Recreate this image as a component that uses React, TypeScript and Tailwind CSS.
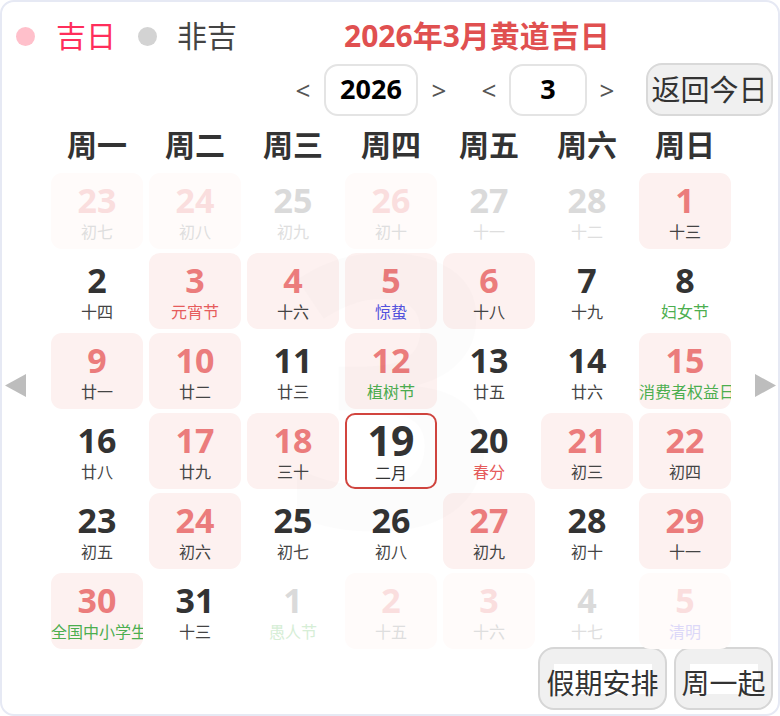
import React from "react";

type Cell = {
  d: number;
  l: string;
  red?: boolean; // auspicious (pink bg, red number)
  other?: boolean;
  lc?: "red" | "blue" | "green";
  today?: boolean;
};

const rows: Cell[][] = [
  [
    { d: 23, l: "初七", red: true, other: true },
    { d: 24, l: "初八", red: true, other: true },
    { d: 25, l: "初九", other: true },
    { d: 26, l: "初十", red: true, other: true },
    { d: 27, l: "十一", other: true },
    { d: 28, l: "十二", other: true },
    { d: 1, l: "十三", red: true },
  ],
  [
    { d: 2, l: "十四" },
    { d: 3, l: "元宵节", red: true, lc: "red" },
    { d: 4, l: "十六", red: true },
    { d: 5, l: "惊蛰", red: true, lc: "blue" },
    { d: 6, l: "十八", red: true },
    { d: 7, l: "十九" },
    { d: 8, l: "妇女节", lc: "green" },
  ],
  [
    { d: 9, l: "廿一", red: true },
    { d: 10, l: "廿二", red: true },
    { d: 11, l: "廿三" },
    { d: 12, l: "植树节", red: true, lc: "green" },
    { d: 13, l: "廿五" },
    { d: 14, l: "廿六" },
    { d: 15, l: "消费者权益日", red: true, lc: "green" },
  ],
  [
    { d: 16, l: "廿八" },
    { d: 17, l: "廿九", red: true },
    { d: 18, l: "三十", red: true },
    { d: 19, l: "二月", today: true },
    { d: 20, l: "春分", lc: "red" },
    { d: 21, l: "初三", red: true },
    { d: 22, l: "初四", red: true },
  ],
  [
    { d: 23, l: "初五" },
    { d: 24, l: "初六", red: true },
    { d: 25, l: "初七" },
    { d: 26, l: "初八" },
    { d: 27, l: "初九", red: true },
    { d: 28, l: "初十" },
    { d: 29, l: "十一", red: true },
  ],
  [
    { d: 30, l: "全国中小学生", red: true, lc: "green" },
    { d: 31, l: "十三" },
    { d: 1, l: "愚人节", other: true, lc: "green" },
    { d: 2, l: "十五", red: true, other: true },
    { d: 3, l: "十六", red: true, other: true },
    { d: 4, l: "十七", other: true },
    { d: 5, l: "清明", red: true, other: true, lc: "blue" },
  ],
];

function lunarColor(c: Cell): string {
  if (c.other) {
    if (c.lc === "green") return "text-[#d6eed6]";
    if (c.lc === "blue") return "text-[#dcd8f8]";
    if (c.lc === "red") return "text-[#f8d6d6]";
    return "text-[#dedede]";
  }
  if (c.lc === "green") return "text-[#4cae4f]";
  if (c.lc === "blue") return "text-[#5252dd]";
  if (c.lc === "red") return "text-[#e65c5c]";
  return "text-[#444444]";
}

function numColor(c: Cell): string {
  if (c.other) return c.red ? "text-[#fadede]" : "text-[#dadada]";
  return c.red ? "text-[#eb7c7c]" : "text-[#333333]";
}

function bgColor(c: Cell): string {
  if (c.today) return "bg-white border-2 border-[#d2453f]";
  if (!c.red) return "";
  return c.other ? "bg-[#fffbfa]" : "bg-[#fdf1f0]";
}

function DayCell({ c }: { c: Cell }) {
  if (c.today) {
    return (
      <div className={`h-[76px] rounded-[10px] flex flex-col items-center pt-[2px] ${bgColor(c)}`}>
        <div className="text-[41px] font-bold leading-[46px] text-[#333333]">{c.d}</div>
        <div className="text-[16px] leading-[20px] text-[#333333] w-full text-center whitespace-nowrap overflow-hidden">
          {c.l}
        </div>
      </div>
    );
  }
  return (
    <div className={`h-[76px] rounded-[11px] flex flex-col items-center pt-[7px] overflow-hidden ${bgColor(c)}`}>
      <div className={`text-[34px] font-bold leading-[40px] ${numColor(c)}`}>{c.d}</div>
      <div
        className={`mt-[2px] text-[16px] leading-[20px] w-full text-center whitespace-nowrap overflow-hidden ${lunarColor(c)}`}
      >
        {c.l}
      </div>
    </div>
  );
}

const weekdays = ["周一", "周二", "周三", "周四", "周五", "周六", "周日"];

export default function App() {
  return (
    <div
      className="w-[780px] h-[716px] box-border border-2 border-[#e6e9f4] rounded-[14px] bg-white overflow-hidden flex flex-col"
      style={{ fontFamily: '"Noto Sans", "Noto Sans CJK SC", sans-serif' }}
    >
      {/* Row 1: legend + title */}
      <div className="flex items-center h-[44px] mt-[12px] pl-[14px]">
        <span className="w-[19px] h-[19px] rounded-full bg-[#ffc0cb]" />
        <span className="ml-[21px] text-[30px] leading-[36px] text-[#ff2e5b]">吉日</span>
        <span className="ml-[22px] w-[19px] h-[19px] rounded-full bg-[#d3d3d3]" />
        <span className="ml-[20px] text-[30px] leading-[36px] text-[#444444]">非吉</span>
        <span className="ml-[107px] text-[30px] leading-[36px] font-bold text-[#e05050]">2026年3月黄道吉日</span>
      </div>

      {/* Row 2: selectors */}
      <div className="flex items-center h-[53px] mt-[5px] pl-[293px]">
        <span className="w-[16px] text-center text-[26px] leading-[30px] text-[#555555]">&lt;</span>
        <div className="ml-[13px] w-[94px] h-[52px] box-border rounded-[14px] border-2 border-[#e4e4e4] flex items-center justify-center text-[27px] font-bold text-black">
          2026
        </div>
        <span className="ml-[13px] w-[16px] text-center text-[26px] leading-[30px] text-[#555555]">&gt;</span>
        <span className="ml-[34px] w-[16px] text-center text-[26px] leading-[30px] text-[#555555]">&lt;</span>
        <div className="ml-[12px] w-[78px] h-[52px] box-border rounded-[14px] border-2 border-[#e4e4e4] flex items-center justify-center text-[27px] font-bold text-black">
          3
        </div>
        <span className="ml-[12px] w-[16px] text-center text-[26px] leading-[30px] text-[#555555]">&gt;</span>
        <button className="ml-[31px] w-[127px] h-[53px] box-border rounded-[16px] border-2 border-[#d9d9d9] bg-[#f0f0f0] flex items-center justify-center text-[29px] leading-[36px] text-[#333333] whitespace-nowrap">
          返回今日
        </button>
      </div>

      {/* Weekday header */}
      <div className="h-[57px] flex items-center pl-[49px]">
        <div className="grid grid-cols-[repeat(7,92px)] gap-x-[6px]">
          {weekdays.map((w) => (
            <div key={w} className="text-center text-[30px] font-bold leading-[36px] text-[#333333]">
              {w}
            </div>
          ))}
        </div>
      </div>

      {/* Body */}
      <div className="flex">
        <div className="w-[49px] pt-[201px] pl-[3px]">
          <svg width="22" height="23" viewBox="0 0 22 23">
            <polygon points="0,11.5 21,0 21,23" fill="#bdbdbd" />
          </svg>
        </div>
        <div className="relative w-[680px]">
          <div className="grid grid-cols-[repeat(7,92px)] gap-x-[6px] gap-y-[4px]">
            {rows.flat().map((c, i) => (
              <DayCell key={i} c={c} />
            ))}
          </div>
          <div className="pointer-events-none absolute inset-0 flex items-center justify-center">
            <span
              className="text-[380px] font-bold leading-none text-black/[0.012] -translate-y-[30px]"
              style={{ fontFamily: '"Noto Sans", sans-serif' }}
            >
              3
            </span>
          </div>
        </div>
        <div className="w-[47px] pt-[201px] flex justify-end pr-[2px]">
          <svg width="22" height="23" viewBox="0 0 22 23">
            <polygon points="22,11.5 1,0 1,23" fill="#bdbdbd" />
          </svg>
        </div>
      </div>

      {/* Bottom buttons */}
      <div className="flex justify-end gap-[7px] pr-[5px] -mt-[2px]">
        <button className="w-[129px] h-[63px] box-border rounded-[16px] border-2 border-[#d6d6d6] bg-[#f0f0f0] flex items-center justify-center text-[28px] text-[#333333]">
          <span className="w-[98px] h-[30px] bg-white flex justify-center whitespace-nowrap leading-[36px]">
            <span className="mt-[1px]">假期安排</span>
          </span>
        </button>
        <button className="w-[99px] h-[63px] box-border rounded-[16px] border-2 border-[#d6d6d6] bg-[#f0f0f0] flex items-center justify-center text-[28px] text-[#333333]">
          <span className="w-[68px] h-[30px] bg-white flex justify-center whitespace-nowrap leading-[36px]">
            <span className="mt-[1px]">周一起</span>
          </span>
        </button>
      </div>
    </div>
  );
}
